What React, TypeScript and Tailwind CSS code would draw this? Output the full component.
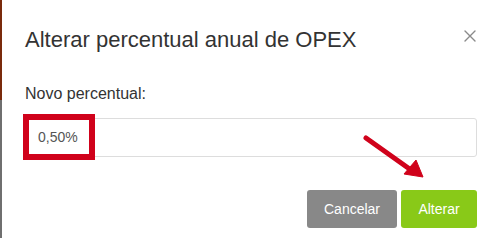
import React from "react";

const font = { fontFamily: '"Liberation Sans", Arial, sans-serif' };

function CloseIcon() {
  return (
    <svg width="12" height="12" viewBox="0 0 12 12" className="block">
      <path d="M1 1 L11 11 M11 1 L1 11" stroke="#8a8a8a" strokeWidth="1.4" strokeLinecap="round" />
    </svg>
  );
}

// red annotation arrow drawn on top of the dialog
function Arrow() {
  return (
    <svg
      className="absolute left-0 top-0 pointer-events-none"
      width="498"
      height="241"
      viewBox="0 0 498 241"
    >
      <path d="M366 138 L411 170" stroke="#d0021b" strokeWidth="5" strokeLinecap="round" />
      <path d="M423 177 L404 174 L416 160 Z" fill="#d0021b" stroke="#d0021b" strokeWidth="1" strokeLinejoin="round" />
    </svg>
  );
}

export default function App() {
  return (
    <div className="relative flex h-[241px] w-[498px] overflow-hidden bg-white" style={font}>
      <div className="flex w-[2px] flex-col">
        <div className="h-[100px] bg-[#7a2a0c]" />
        <div className="h-[138px] bg-[#6f6f6f]" />
      </div>
      <div className="flex h-[239px] flex-1 flex-col rounded-l-[6px] bg-white">
        <div className="flex items-start justify-between pl-[23px] pr-[22px] pt-[27px]">
          <h4 className="text-[22px] leading-[26px] text-[#333333]">Alterar percentual anual de OPEX</h4>
          <button className="mt-[3px]">
            <CloseIcon />
          </button>
        </div>
        <div className="pl-[23px] pr-[21px] pt-[31px]">
          <label className="block text-[16px] leading-[20px] text-[#333333]">Novo percentual:</label>
          <div className="relative mt-[14px]">
            <div className="flex h-[39px] items-center rounded-[3px] border border-[#dddddd] bg-white pl-[12px] text-[14px] text-[#555555]">
              0,50%
            </div>
            <div className="absolute left-[-2px] top-[-4px] h-[46px] w-[72px] border-[6px] border-[#d0021b]" />
          </div>
          <div className="mt-[33px] flex justify-end gap-[4px]">
            <button className="h-[38px] w-[90px] rounded-[3px] bg-[#888888] text-[14px] text-white">Cancelar</button>
            <button className="h-[38px] w-[76px] rounded-[3px] bg-[#89c918] text-[14px] text-white">Alterar</button>
          </div>
        </div>
      </div>
      <Arrow />
    </div>
  );
}
